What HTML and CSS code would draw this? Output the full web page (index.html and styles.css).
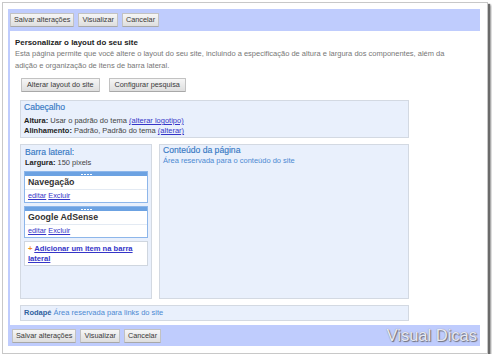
FILE: index.html
```html
<!DOCTYPE html>
<html lang="pt">
<head>
<meta charset="utf-8">
<link rel="stylesheet" href="styles.css">
</head>
<body>
<div class="frame">
  <div class="panel">
    <div class="bar">
      <button class="btn">Salvar alterações</button>
      <button class="btn">Visualizar</button>
      <button class="btn">Cancelar</button>
    </div>
    <div class="main">
      <h1 class="title">Personalizar o layout do seu site</h1>
      <p class="desc">Esta página permite que você altere o layout do seu site, incluindo a especificação de altura e largura dos componentes, além da<br>adição e organização de itens de barra lateral.</p>
      <div class="actions">
        <button class="btn btn-lg">Alterar layout do site</button>
        <button class="btn btn-lg">Configurar pesquisa</button>
      </div>
      <div class="layout">
        <div class="box header">
          <div class="heading">Cabeçalho</div>
          <div class="row"><b>Altura:</b> Usar o padrão do tema <a href="#">(alterar logotipo)</a></div>
          <div class="row"><b>Alinhamento:</b> Padrão, Padrão do tema <a href="#">(alterar)</a></div>
        </div>
        <div class="cols">
          <div class="box sidebar">
            <div class="heading">Barra lateral:</div>
            <div class="row width"><b>Largura:</b> 150 pixels</div>
            <div class="widget">
              <div class="strip"><span class="grip"></span></div>
              <div class="wtitle">Navegação</div>
              <div class="wlinks"><a href="#">editar</a> <a href="#">Excluir</a></div>
            </div>
            <div class="widget">
              <div class="strip"><span class="grip"></span></div>
              <div class="wtitle">Google AdSense</div>
              <div class="wlinks"><a href="#">editar</a> <a href="#">Excluir</a></div>
            </div>
            <div class="add"><span class="plus">+</span> <a href="#">Adicionar um item na barra<br>lateral</a></div>
          </div>
          <div class="box content">
            <div class="heading">Conteúdo da página</div>
            <div class="note">Área reservada para o conteúdo do site</div>
          </div>
        </div>
        <div class="box footer">
          <b class="ftitle">Rodapé</b> <span class="note">Área reservada para links do site</span>
        </div>
      </div>
    </div>
    <div class="bar bottom">
      <button class="btn">Salvar alterações</button>
      <button class="btn">Visualizar</button>
      <button class="btn">Cancelar</button>
      <span class="watermark">Visual Dicas</span>
    </div>
  </div>
</div>
</body>
</html>
```

FILE: styles.css
```css
html, body {
  margin: 0;
  padding: 0;
  background: #ffffff;
}
body {
  font-family: "Liberation Sans", Arial, sans-serif;
  font-size: 7.5px;
  color: #333;
}
.frame {
  box-sizing: border-box;
  width: 486px;
  height: 352px;
  margin: 2px 0 0 2px;
  padding: 6px 0 0 5px;
  border: 1px solid #c8c8c8;
  background: #fff;
  box-shadow: 2px 2px 1px #6a6a6a, 3px 3px 2px #999;
}
.panel {
  width: 472px;
}
.bar {
  height: 22px;
  background: #bfccfd;
  display: flex;
  align-items: center;
  gap: 4px;
  padding-left: 2px;
}
.bar.bottom {
  height: 21px;
  padding-left: 4px;
}
.btn {
  font-family: "Liberation Sans", Arial, sans-serif;
  font-size: 7.3px;
  color: #3a3a3a;
  height: 14px;
  line-height: 12px;
  padding: 0 3px;
  margin: 0;
  border: 1px solid #c2c2c2;
  border-bottom-color: #a8a8a8;
  border-radius: 1px;
  background: linear-gradient(#f6f6f6, #dedede);
}
.main {
  border-left: 2px solid #bfccfd;
  padding: 7px 0 4px 5px;
}
.title {
  margin: 0;
  font-size: 7.9px;
  line-height: 10px;
  font-weight: bold;
  color: #222;
}
.desc {
  margin: 0;
  line-height: 12px;
  color: #777;
}
.actions {
  display: flex;
  gap: 9px;
  margin: 6px 0 0 6px;
}
.btn-lg {
  height: 14px;
  padding: 0 5px;
}
.layout {
  width: 389px;
  margin: 8px 0 0 5px;
}
.box {
  box-sizing: border-box;
  background: #e9f0fc;
  border: 1px solid #d3d9e2;
}
.heading {
  font-size: 8.6px;
  line-height: 11px;
  color: #3779c4;
  -webkit-text-stroke: 0.15px #3779c4;
}
.row {
  line-height: 10px;
  color: #444;
}
.row b {
  color: #222;
}
a {
  color: #3535c8;
  text-decoration: underline;
}
.header {
  height: 38px;
  padding: 1px 3px 0;
}
.header .heading {
  margin-bottom: 3px;
}
.cols {
  display: flex;
  gap: 7px;
  margin-top: 6px;
  height: 155px;
}
.sidebar {
  width: 132px;
  padding: 2px 3px 0;
}
.sidebar .heading {
  padding-left: 1px;
}
.width {
  padding-left: 1px;
}
.widget {
  margin-top: 3px;
  background: #fff;
  border: 1px solid #8db6ea;
}
.strip {
  height: 4px;
  background: #6ca2e2;
  display: flex;
  justify-content: center;
  align-items: center;
}
.grip {
  width: 11px;
  height: 1px;
  background: repeating-linear-gradient(90deg, #ffffff 0 2px, transparent 2px 3px);
}
.wtitle {
  height: 13px;
  line-height: 13px;
  padding-left: 3px;
  font-size: 8.8px;
  font-weight: bold;
  color: #333;
  border-bottom: 1px solid #e3eaf3;
}
.wlinks {
  height: 12px;
  line-height: 12px;
  padding-left: 3px;
  font-size: 7.3px;
}
.add {
  margin-top: 3px;
  background: #fff;
  border: 1px solid #cfd6df;
  padding: 2px 3px 1px;
  line-height: 10px;
  font-size: 7.6px;
  font-weight: bold;
}
.plus {
  color: #f08a1c;
}
.content {
  flex: 1;
  padding: 0 3px;
}
.note {
  color: #4d8ad2;
  line-height: 10px;
}
.footer {
  margin-top: 6px;
  height: 16px;
  padding: 0 3px;
  line-height: 14px;
}
.ftitle {
  color: #2f619e;
}
.footer .note {
  line-height: 14px;
}
.watermark {
  margin-left: auto;
  margin-right: 3px;
  font-family: "Liberation Sans", Arial, sans-serif;
  font-size: 16.5px;
  line-height: 21px;
  color: #e6e8f2;
  text-shadow: 1px 1px 1px #6c6c74, 0 0 1px #8a8a92;
}
```
